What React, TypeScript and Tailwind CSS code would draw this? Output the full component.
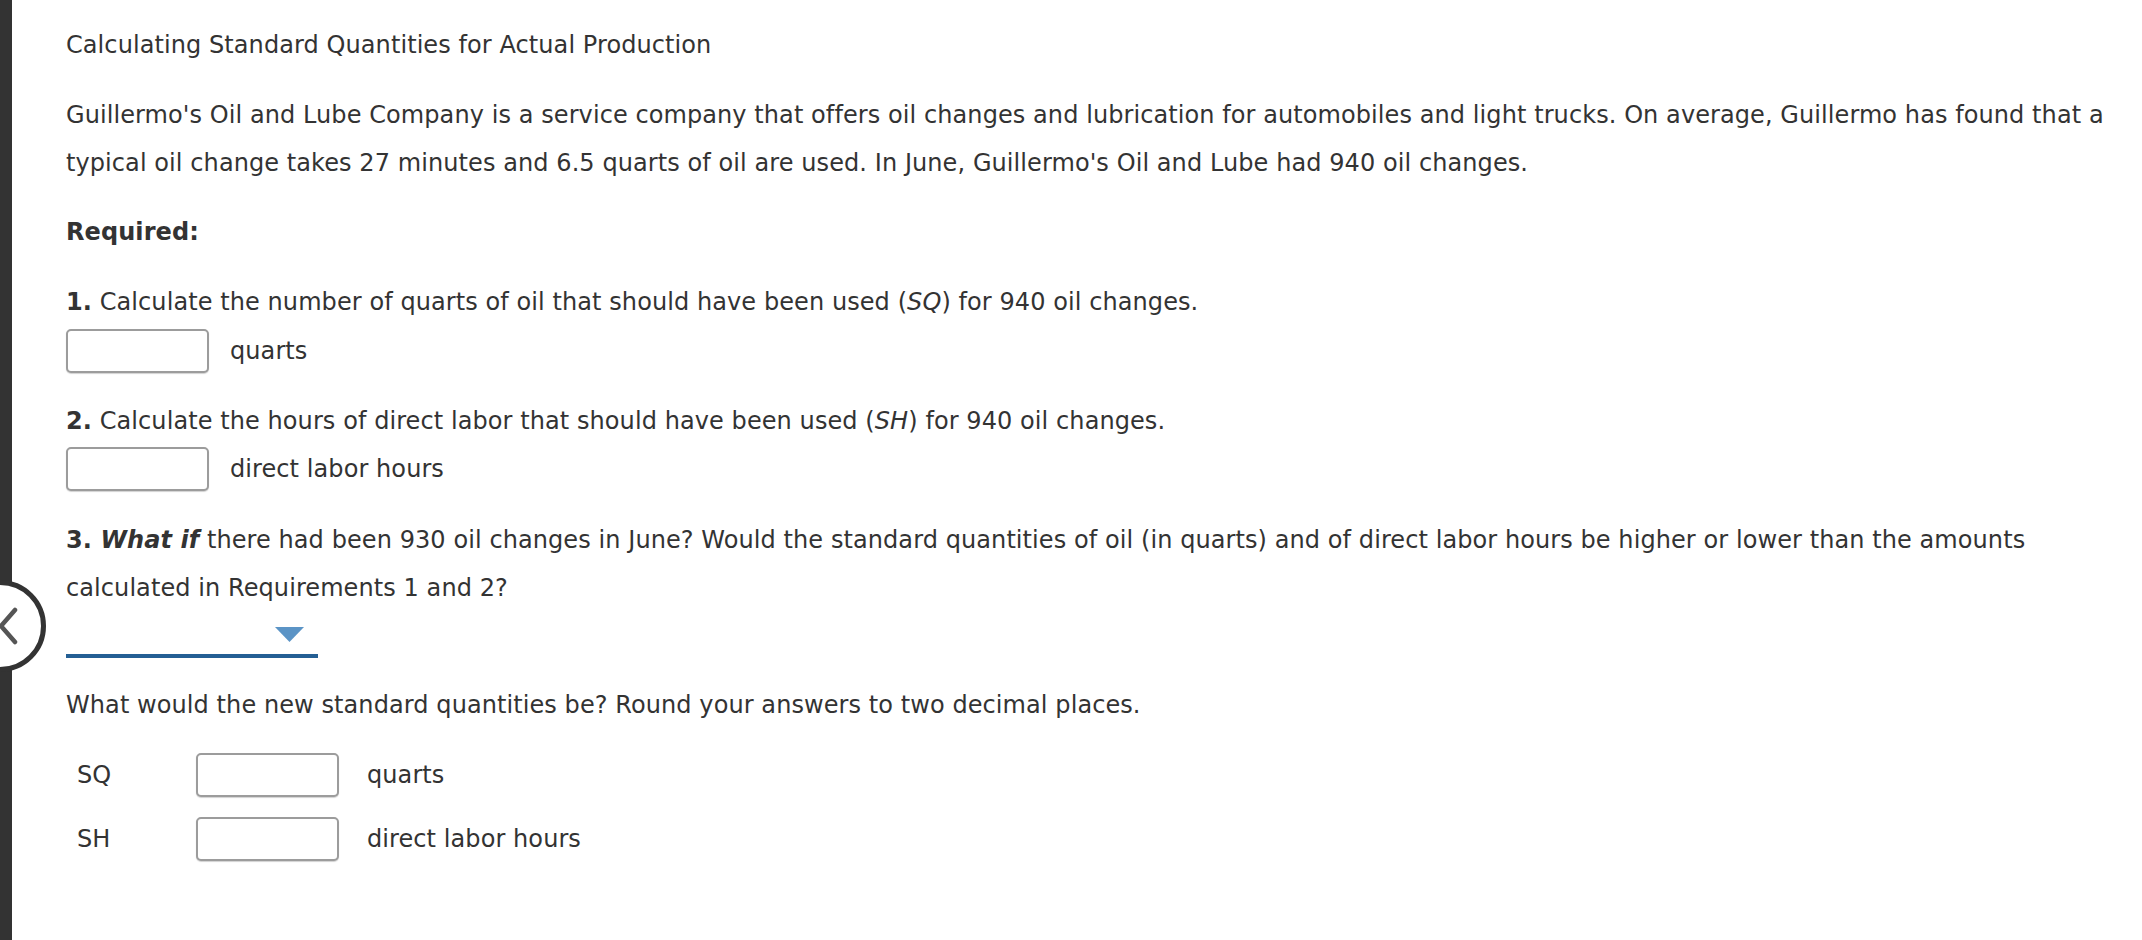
import React from 'react';

const font = { fontFamily: '"DejaVu Sans", Verdana, sans-serif' };

function AnswerBox() {
  return (
    <input
      type="text"
      className="h-[44px] w-[143px] rounded-[5px] border-2 border-[#9c9c9c] bg-white shadow-[0_1px_1px_rgba(0,0,0,0.18)] outline-none"
    />
  );
}

function App() {
  return (
    <div
      className="relative flex min-h-[940px] w-full overflow-hidden bg-white text-[24px] leading-[48px] tracking-[0.08px] text-[#333]"
      style={font}
    >
      <div className="w-[12px] shrink-0 bg-[#333]" />

      {/* back button on the edge */}
      <div className="absolute left-[-46px] top-[580px] h-[92px] w-[92px] rounded-full border-[5px] border-[#333] bg-white" />
      <svg
        className="absolute left-0 top-[606px]"
        width="18"
        height="40"
        viewBox="0 0 18 40"
      >
        <path
          d="M15 4 L1 20 L15 36"
          fill="none"
          stroke="#555"
          strokeWidth="4.5"
          strokeLinecap="round"
        />
      </svg>

      <div className="flex-1 pl-[54px] pr-[10px] pt-[21px]">
        <div>Calculating Standard Quantities for Actual Production</div>

        <p className="mt-[22px]">
          Guillermo's Oil and Lube Company is a service company that offers oil changes and lubrication for automobiles and light trucks. On average, Guillermo has found that a
          <br />
          typical oil change takes 27 minutes and 6.5 quarts of oil are used. In June, Guillermo's Oil and Lube had 940 oil changes.
        </p>

        <div className="mt-[21px] font-bold">Required:</div>

        {/* 1 */}
        <div className="mt-[22px]">
          <b>1.</b> Calculate the number of quarts of oil that should have been used (<i>SQ</i>) for 940 oil changes.
        </div>
        <div className="mt-[3px] flex h-[44px] items-center gap-[21px]">
          <AnswerBox />
          <span>quarts</span>
        </div>

        {/* 2 */}
        <div className="mt-[24px]">
          <b>2.</b> Calculate the hours of direct labor that should have been used (<i>SH</i>) for 940 oil changes.
        </div>
        <div className="mt-[2px] flex h-[44px] items-center gap-[21px]">
          <AnswerBox />
          <span>direct labor hours</span>
        </div>

        {/* 3 */}
        <p className="mt-[25px]">
          <b>3. <i>What if</i></b> there had been 930 oil changes in June? Would the standard quantities of oil (in quarts) and of direct labor hours be higher or lower than the amounts
          <br />
          calculated in Requirements 1 and 2?
        </p>

        <div className="relative h-[46px] w-[252px] border-b-[4px] border-[#245f94]">
          <svg
            className="absolute left-[209px] top-[15px]"
            width="29"
            height="15"
            viewBox="0 0 29 15"
          >
            <path d="M0 0 L29 0 L14.5 15 Z" fill="#5b94c6" />
          </svg>
        </div>

        <div className="mt-[23px]">
          What would the new standard quantities be? Round your answers to two decimal places.
        </div>

        <div className="mt-[24px] flex flex-col gap-[20px]">
          <div className="flex h-[44px] items-center">
            <span className="w-[130px] pl-[11px]">SQ</span>
            <AnswerBox />
            <span className="ml-[28px]">quarts</span>
          </div>
          <div className="flex h-[44px] items-center">
            <span className="w-[130px] pl-[11px]">SH</span>
            <AnswerBox />
            <span className="ml-[28px]">direct labor hours</span>
          </div>
        </div>
      </div>
    </div>
  );
}

export default App;
